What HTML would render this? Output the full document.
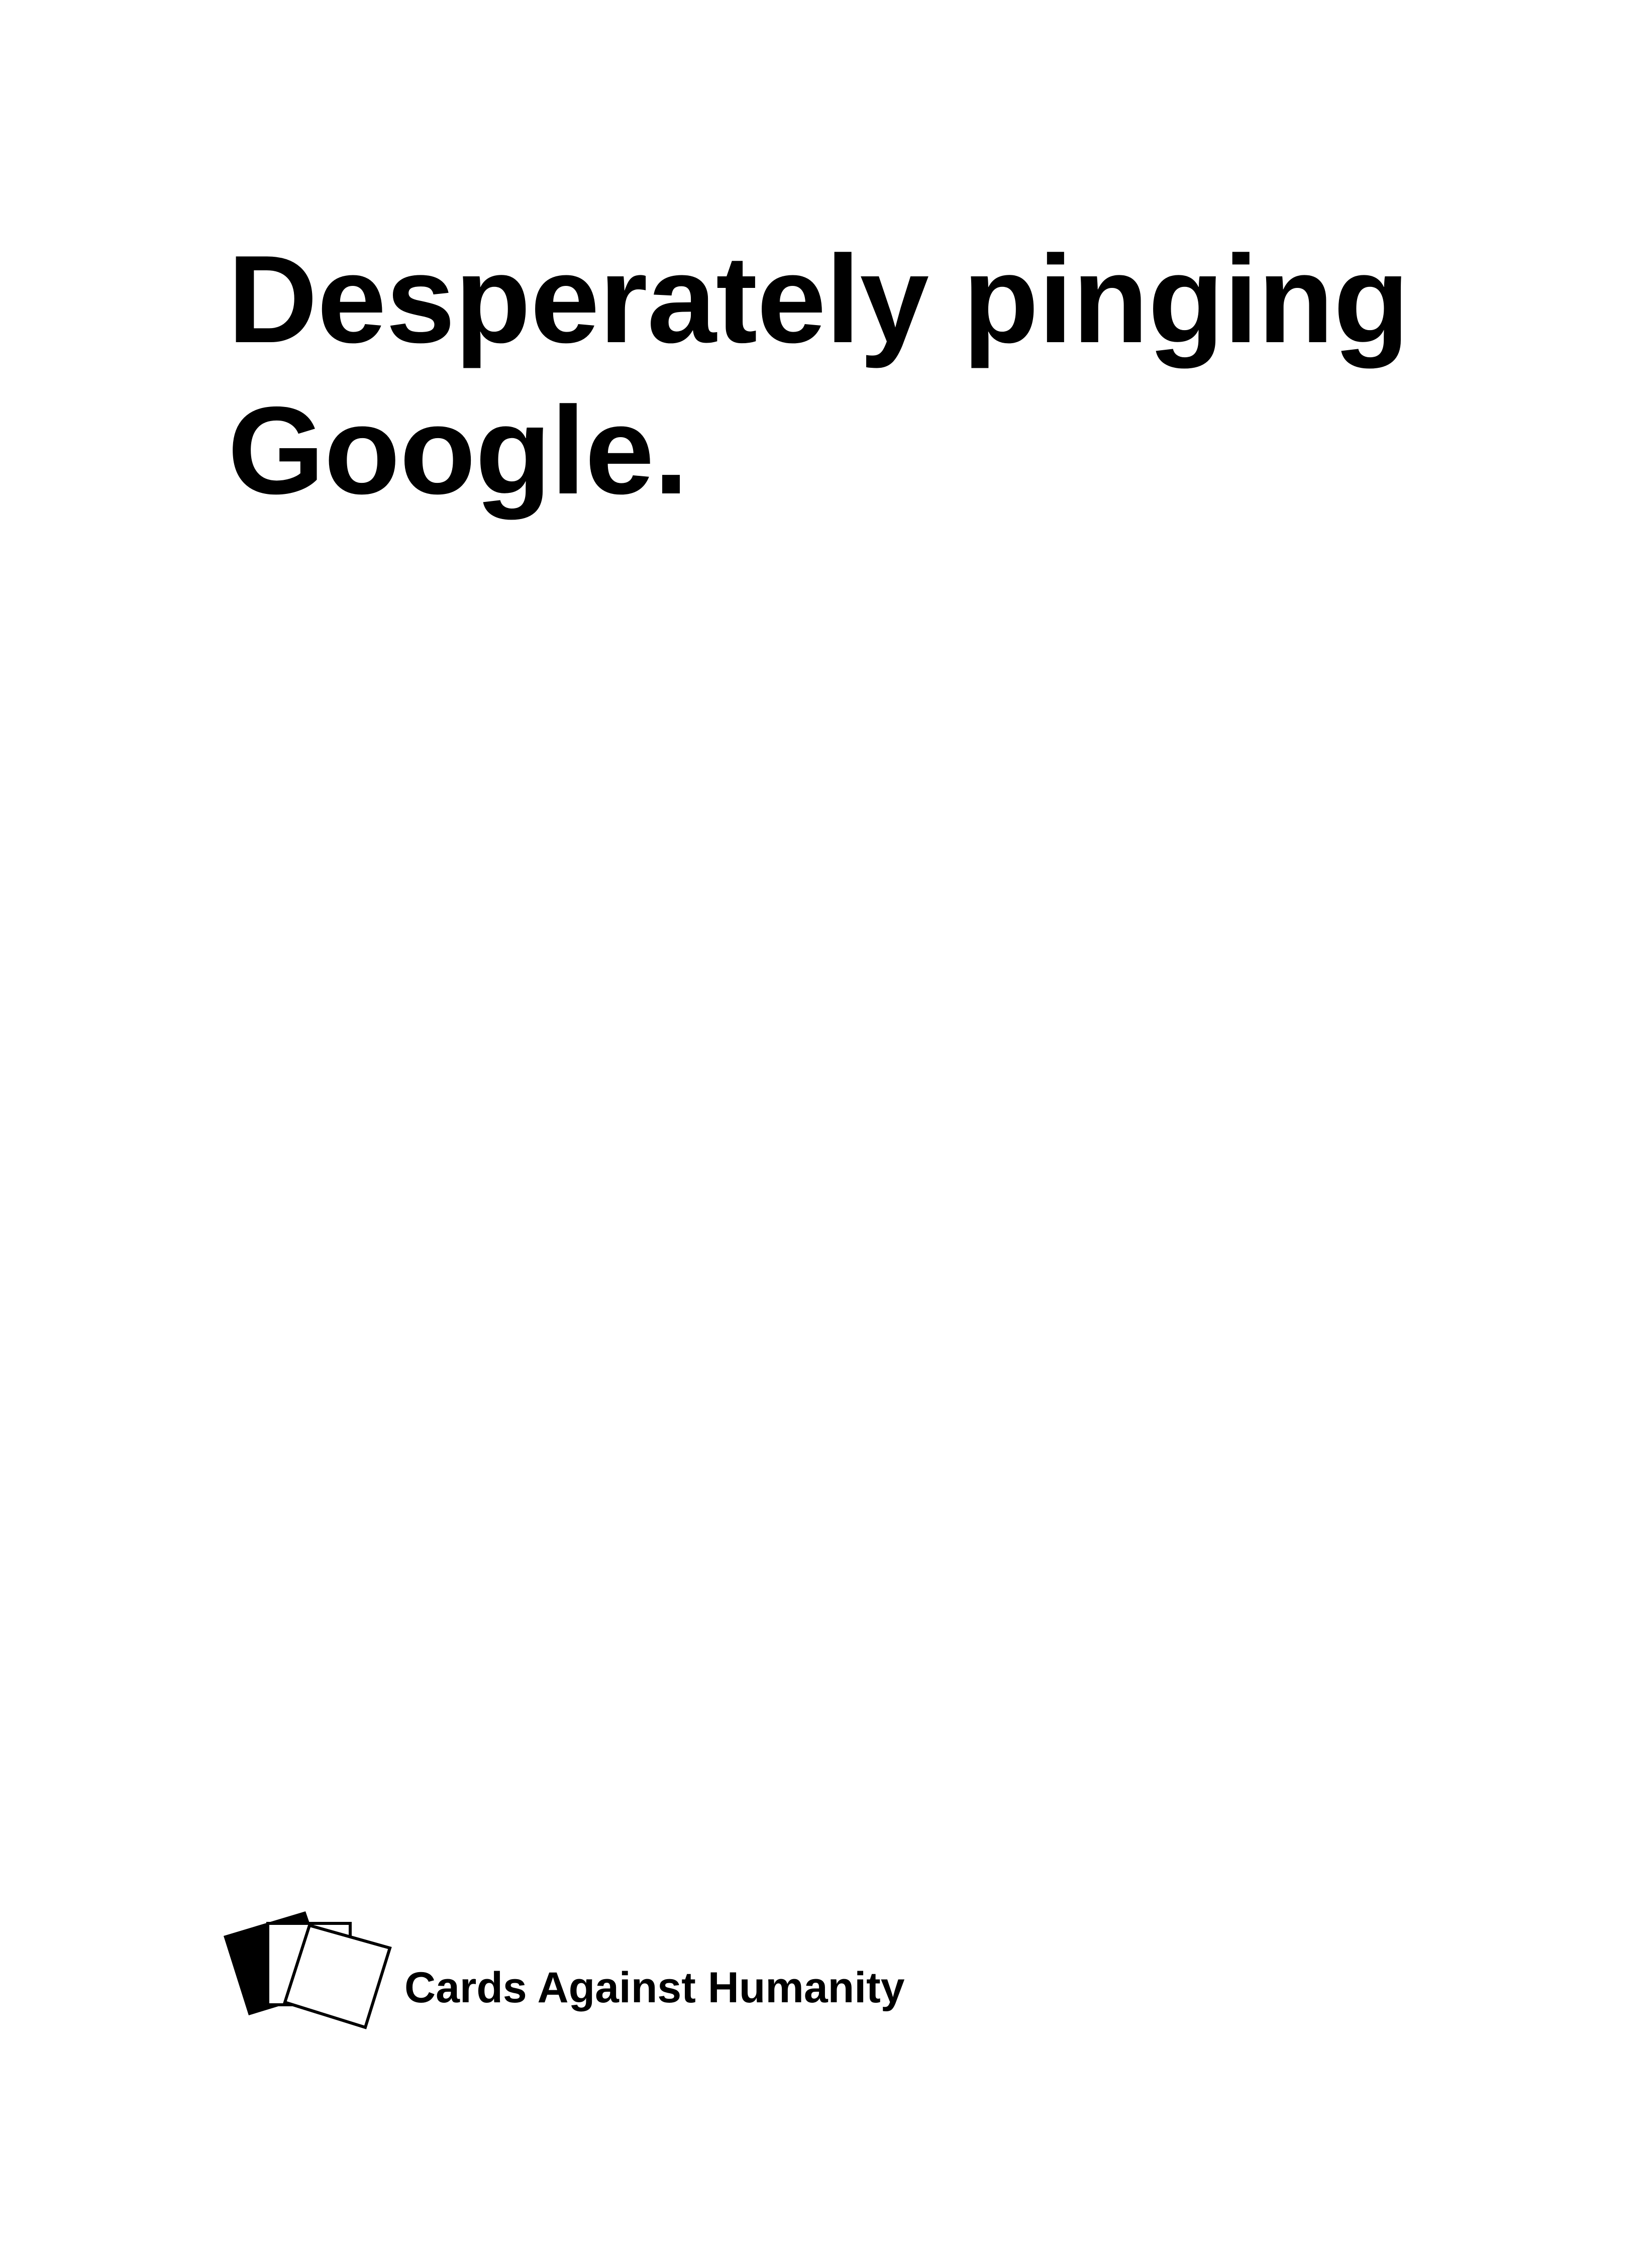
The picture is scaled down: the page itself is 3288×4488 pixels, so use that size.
<!DOCTYPE html>
<html><head><meta charset="utf-8"><style>
html,body{margin:0;padding:0;background:#fff;}
body{width:3288px;height:4488px;position:relative;overflow:hidden;font-family:"Liberation Sans",Arial,sans-serif;color:#000;}
.t{position:absolute;left:453px;top:445px;font-size:248px;font-weight:bold;line-height:301px;letter-spacing:-1px;white-space:nowrap;}
.b{position:absolute;left:805px;top:3906px;font-size:86px;font-weight:bold;line-height:100px;white-space:nowrap;}
svg{position:absolute;left:0;top:0;}
</style></head><body>
<div class="t">Desperately pinging<br>Google.</div>
<svg width="3288" height="4488" viewBox="0 0 3288 4488">
<polygon points="445,3853 608,3804 662,3960 495,4011" fill="#000"/>
<rect x="533" y="3828" width="164" height="162" fill="#fff" stroke="#000" stroke-width="6"/>
<polygon points="616,3832 776,3877 727,4035 567,3985" fill="#fff" stroke="#000" stroke-width="6"/>
</svg>
<div class="b">Cards Against Humanity</div>
</body></html>
